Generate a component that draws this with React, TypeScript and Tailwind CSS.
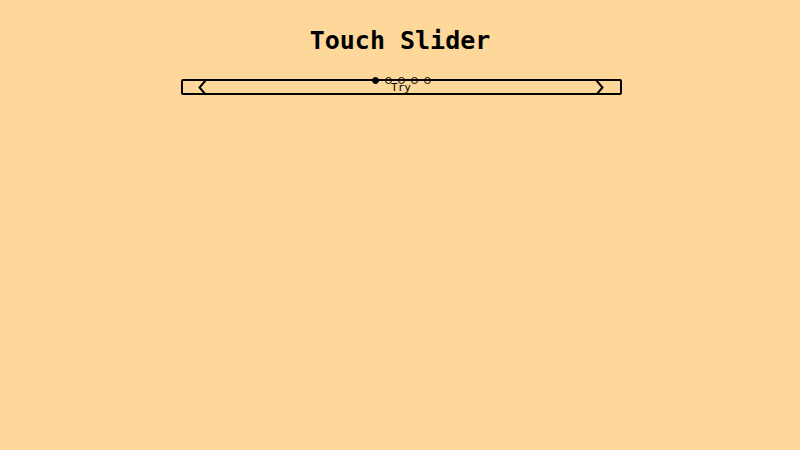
import { useState } from "react"

const slides = ["Try", "Swipe", "Drag", "Touch", "Slide"]

function Chevron({ dir }: { dir: "left" | "right" }) {
  return (
    <svg width="10" height="15" viewBox="0 0 10 15" fill="none" stroke="black" strokeWidth="2">
      {dir === "left" ? <path d="M8.5 0.5 L2.5 7.5 L8.5 14.5" /> : <path d="M1.5 0.5 L7.5 7.5 L1.5 14.5" />}
    </svg>
  )
}

export default function App() {
  const [index, setIndex] = useState(0)
  const prev = () => setIndex((index + slides.length - 1) % slides.length)
  const next = () => setIndex((index + 1) % slides.length)

  return (
    <div className="min-h-screen bg-[#fed79b] font-['DejaVu_Sans_Mono',monospace] text-black">
      <h1 className="pt-[26px] text-center text-[25px] font-bold leading-[30px]">Touch Slider</h1>

      {/* Slider */}
      <div className="relative ml-[181px] mt-[23px] flex h-[16px] w-[441px] items-center rounded-[2px] border-2 border-black">
        <button onClick={prev} className="ml-[14px] flex h-full items-center">
          <Chevron dir="left" />
        </button>
        <div className="flex flex-1 justify-center pt-[2px] text-[11px] leading-[12px]">{slides[index]}</div>
        <button onClick={next} className="mr-[15px] flex h-full items-center">
          <Chevron dir="right" />
        </button>

        {/* Dots */}
        <div className="absolute left-[189px] top-[-4px] flex gap-[6px]">
          {slides.map((s, i) => (
            <button
              key={s}
              onClick={() => setIndex(i)}
              className={`h-[7px] w-[7px] rounded-full border-[1.5px] border-black ${i === index ? "bg-black" : "bg-transparent"}`}
            />
          ))}
        </div>
      </div>
    </div>
  )
}
